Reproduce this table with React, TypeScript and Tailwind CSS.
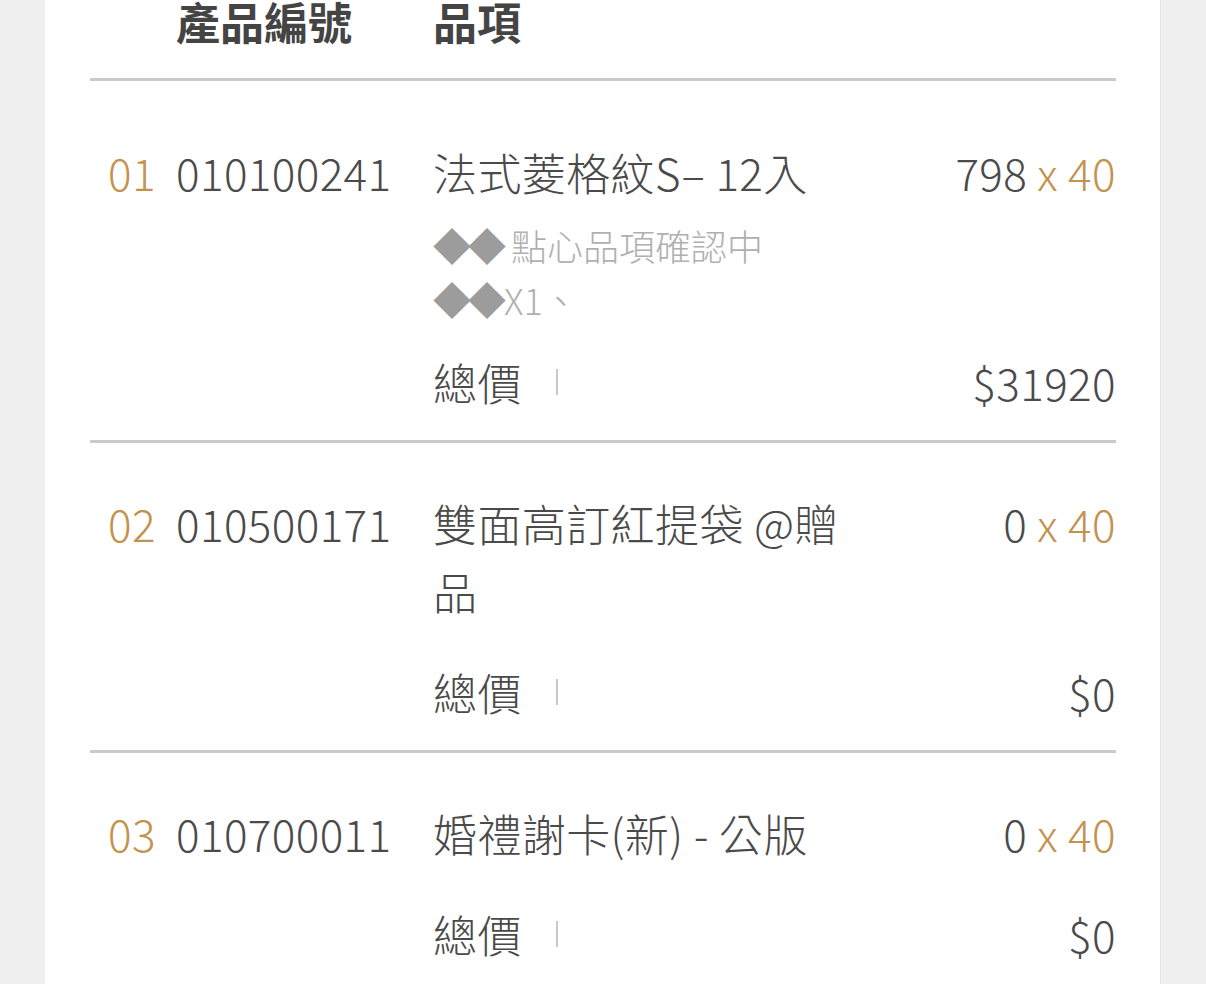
import React from "react";

interface OrderItem {
  no: string;
  code: string;
  name: string;
  notes?: string[];
  price: number;
  qty: number;
}

const items: OrderItem[] = [
  {
    no: "01",
    code: "010100241",
    name: "法式菱格紋S– 12入",
    notes: ["點心品項確認中", "X1、"],
    price: 798,
    qty: 40,
  },
  { no: "02", code: "010500171", name: "雙面高訂紅提袋 @贈品", price: 0, qty: 40 },
  { no: "03", code: "010700011", name: "婚禮謝卡(新) - 公版", price: 0, qty: 40 },
];

const font = {
  fontFamily: '"Noto Sans CJK TC", "Noto Sans", sans-serif',
};

export default function App() {
  return (
    <div className="min-h-screen bg-[#efefef]" style={font}>
      <div className="mx-[45px] min-h-screen bg-white border-r border-[#e6e6e6] px-[45px] pr-[44px]">
        {/* header */}
        <div className="flex border-b-[3px] border-[#cacaca] pb-[36px] text-[44px] leading-[42px] font-bold text-[#444]">
          <div className="w-[86px] shrink-0" />
          <div className="w-[257px] shrink-0">產品編號</div>
          <div>品項</div>
        </div>

        {items.map((item, i) => (
          <div
            key={item.no}
            className={
              "border-b-[3px] border-[#cacaca] pb-[24px] " +
              (i === 0 ? "pt-[57px]" : "pt-[46px]")
            }
          >
            <div className="flex text-[44px] leading-[68px] font-light tracking-[0.4px] text-[#4a4a4a]">
              <div className="w-[86px] shrink-0 pl-[18px] text-[#c3924d]">{item.no}</div>
              <div className="w-[257px] shrink-0">{item.code}</div>
              <div className="w-[420px] shrink-0">
                <div>{item.name}</div>
                {item.notes && (
                  <div className="mt-[12px] text-[36px] leading-[54px] tracking-normal text-[#b0b0b0]">
                    {item.notes.map((n, j) => (
                      <div key={j} className="flex items-center">
                        <span className="text-[#9c9c9c] text-[38px] tracking-[-3px] mr-[8px]">◆◆</span>
                        <span className={j === 1 ? "-ml-[7px]" : ""}>{n}</span>
                      </div>
                    ))}
                  </div>
                )}
              </div>
              <div className="flex-1 text-right whitespace-nowrap">
                {item.price} <span className="text-[#c3924d]">x 40</span>
              </div>
            </div>

            <div
              className={
                "flex items-center text-[44px] leading-[68px] font-light tracking-[0.4px] text-[#4a4a4a] " +
                (item.notes ? "mt-[22px]" : "mt-[33px]")
              }
            >
              <div className="w-[343px] shrink-0" />
              <span>總價</span>
              <span className="ml-[34px] inline-block w-[2px] h-[26px] bg-[#c8c8c8]" />
              <span className="flex-1 text-right">${item.price * item.qty}</span>
            </div>
          </div>
        ))}
      </div>
    </div>
  );
}
